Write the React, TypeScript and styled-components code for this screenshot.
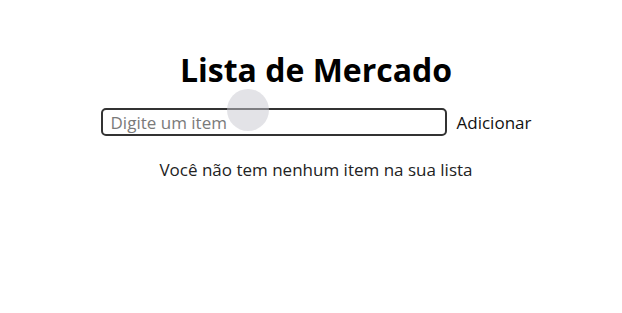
import React, { useState } from "react";
import styled, { createGlobalStyle } from "styled-components";

const GlobalStyle = createGlobalStyle`
  body {
    margin: 0;
    background: #ffffff;
    font-family: "Open Sans", "Noto Sans", sans-serif;
    color: #111111;
  }
`;

const Page = styled.main`
  display: flex;
  flex-direction: column;
  align-items: center;
  padding: 50px 0 0 10px;
`;

const Title = styled.h1`
  margin: 0;
  font-size: 32px;
  line-height: 40px;
  font-weight: 700;
  color: #000000;
`;

const Form = styled.form`
  position: relative;
  display: flex;
  align-items: center;
  gap: 10px;
  margin-top: 18px;
`;

const ItemInput = styled.input`
  box-sizing: border-box;
  width: 346px;
  height: 28px;
  padding: 0 8px;
  border: 2px solid #333333;
  border-radius: 5px;
  font-family: inherit;
  font-size: 17px;
  color: #111111;
  outline: none;

  &::placeholder {
    color: #7a7a7a;
  }
`;

const AddButton = styled.button`
  padding: 0;
  border: none;
  background: none;
  font-family: inherit;
  font-size: 17px;
  color: #111111;
  cursor: pointer;
`;

const TouchMark = styled.span`
  position: absolute;
  left: 126px;
  top: -19px;
  width: 42px;
  height: 42px;
  border-radius: 50%;
  background: rgba(200, 200, 208, 0.5);
  pointer-events: none;
`;

const EmptyMessage = styled.p`
  margin: 22px 0 0;
  font-size: 17px;
  color: #222222;
`;

const App = () => {
  const [item, setItem] = useState("");
  const [items] = useState<string[]>([]);

  return (
    <>
      <GlobalStyle />
      <Page>
        <Title>Lista de Mercado</Title>
        <Form onSubmit={(e) => e.preventDefault()}>
          <ItemInput
            placeholder="Digite um item"
            value={item}
            onChange={(e) => setItem(e.target.value)}
          />
          <AddButton type="submit">Adicionar</AddButton>
          <TouchMark />
        </Form>
        {items.length === 0 && (
          <EmptyMessage>Você não tem nenhum item na sua lista</EmptyMessage>
        )}
      </Page>
    </>
  );
};

export default App;
